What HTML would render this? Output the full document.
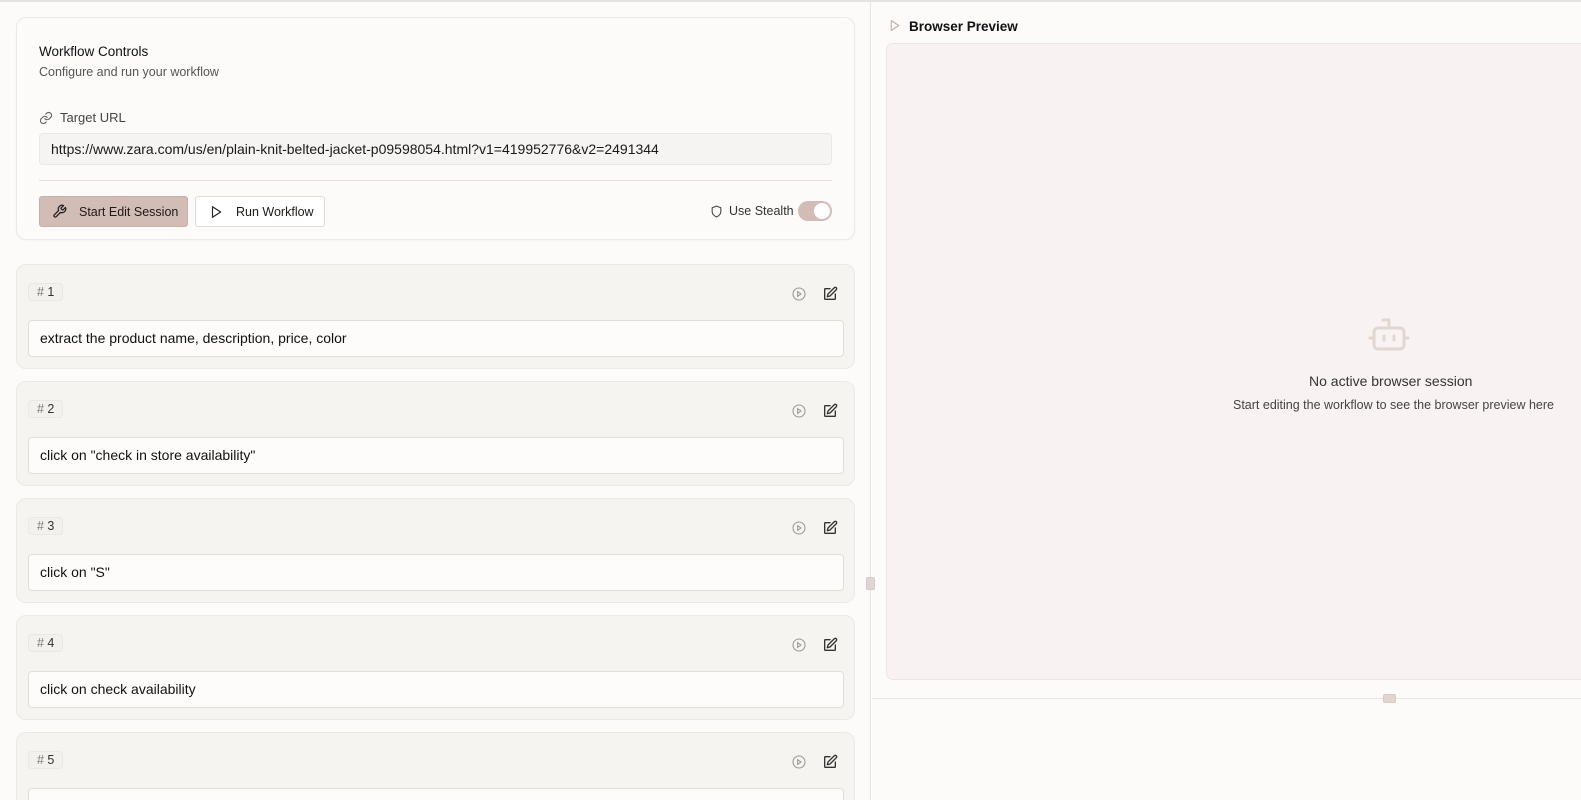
<!DOCTYPE html>
<html style="width:1581px;height:800px;overflow:hidden"><head><meta charset="utf-8"><style>
*{box-sizing:border-box;margin:0;padding:0}
html,body{width:1581px;height:800px;overflow:hidden}
body{background:#fcfbfa;font-family:"Liberation Sans",sans-serif;color:#1c1917;position:relative}
.top{position:absolute;left:0;top:0;width:1581px;height:2px;background:#e7e3e0}
.left{position:absolute;left:0;top:2px;width:871px;height:798px;border-right:1px solid #e9e4e1;overflow:hidden}
.card{position:absolute;left:16px;width:839px;border:1px solid #ede8e5;border-radius:10px}
.ctrl{top:15px;height:223px;background:#fcfbfa;box-shadow:0 1px 2px rgba(0,0,0,.03)}
.t{position:absolute;font-size:13px;white-space:nowrap}
.step{background:#f5f4f1;height:105px}
.badge{position:absolute;left:11px;top:18px;height:18px;padding:0 8px;border:1px solid #ebe7e3;border-radius:4px;background:#f3f1ee;font-size:12.5px;line-height:16px;color:#333}
.inp{position:absolute;left:11px;top:55px;width:816px;height:37px;border:1px solid #e2ddd9;border-radius:4px;background:#fdfcfb;font-size:14px;line-height:35px;padding-left:11px;color:#111}
.ic{position:absolute;top:21px}
</style></head><body>
<div class="top"></div>
<div class="left">
 <div class="card ctrl">
  <div class="t" style="left:22px;top:26px;font-size:13.5px;color:#111">Workflow Controls</div>
  <div class="t" style="left:22px;top:47px;font-size:12.5px;color:#555">Configure and run your workflow</div>
  <svg style="position:absolute;left:22px;top:93px" width="14" height="14" viewBox="0 0 24 24" fill="none" stroke="#666" stroke-width="2" stroke-linecap="round"><path d="M10 13a5 5 0 0 0 7.5.5l3-3a5 5 0 0 0-7-7l-1.7 1.7"/><path d="M14 11a5 5 0 0 0-7.5-.5l-3 3a5 5 0 0 0 7 7l1.7-1.7"/></svg>
  <div class="t" style="left:43px;top:92px;font-size:13px;color:#444">Target URL</div>
  <div style="position:absolute;left:22px;top:115px;width:793px;height:32px;background:#f5f4f2;border:1px solid #ebe7e4;border-radius:4px;font-size:14px;line-height:30px;padding-left:11px;white-space:nowrap">https://www.zara.com/us/en/plain-knit-belted-jacket-p09598054.html?v1=419952776&amp;v2=2491344</div>
  <div style="position:absolute;left:22px;top:162px;width:793px;height:1px;background:#e6dcd8"></div>
  <div style="position:absolute;left:22px;top:178px;width:149px;height:31px;background:#d2bcb6;border-radius:3px;border:1px solid #c8b1aa">
   <svg style="position:absolute;left:12px;top:7px" width="15" height="15" viewBox="0 0 24 24" fill="none" stroke="#222" stroke-width="2" stroke-linecap="round" stroke-linejoin="round"><path d="M14.7 6.3a1 1 0 0 0 0 1.4l1.6 1.6a1 1 0 0 0 1.4 0l3.8-3.8a6 6 0 0 1-7.9 7.9l-6.9 6.9a2.1 2.1 0 0 1-3-3l6.9-6.9a6 6 0 0 1 7.9-7.9z"/></svg>
   <span class="t" style="left:39px;top:8px;font-size:12.5px">Start Edit Session</span></div>
  <div style="position:absolute;left:178px;top:178px;width:130px;height:31px;background:#fff;border-radius:3px;border:1px solid #e0dad6">
   <svg style="position:absolute;left:13px;top:8px" width="14" height="14" viewBox="0 0 24 24" fill="none" stroke="#222" stroke-width="2" stroke-linejoin="round"><path d="M6 3l14 9-14 9z"/></svg>
   <span class="t" style="left:40px;top:8px;font-size:12.5px">Run Workflow</span></div>
  <svg style="position:absolute;left:693px;top:187px" width="13" height="13" viewBox="0 0 24 24" fill="none" stroke="#444" stroke-width="2" stroke-linejoin="round"><path d="M12 22s8-3 8-10V5l-8-3-8 3v7c0 7 8 10 8 10z"/></svg>
  <div class="t" style="left:712px;top:186px;font-size:12.5px;color:#333">Use Stealth</div>
  <div style="position:absolute;left:781px;top:183px;width:34px;height:20px;border-radius:10px;background:#d2bcb6"><div style="position:absolute;right:2px;top:2px;width:16px;height:16px;border-radius:50%;background:#fff"></div></div>
 </div>
 <div class="card step" style="top:262px"><div class="badge"><span style="color:#777">#</span> 1</div><svg class="ic" style="left:774px" width="16" height="16" viewBox="0 0 24 24" fill="none" stroke="#999" stroke-width="1.6"><circle cx="12" cy="12" r="9"/><path d="M10 8.5l5 3.5-5 3.5z"/></svg><svg class="ic" style="left:805px" width="16" height="16" viewBox="0 0 24 24" fill="none" stroke="#333" stroke-width="2" stroke-linecap="round" stroke-linejoin="round"><path d="M12 4H5a1 1 0 0 0-1 1v14a1 1 0 0 0 1 1h14a1 1 0 0 0 1-1v-7"/><path d="M18.4 2.6a2.1 2.1 0 0 1 3 3L12 15l-4 1 1-4z"/></svg><div class="inp">extract the product name, description, price, color</div></div>
 <div class="card step" style="top:379px"><div class="badge"><span style="color:#777">#</span> 2</div><svg class="ic" style="left:774px" width="16" height="16" viewBox="0 0 24 24" fill="none" stroke="#999" stroke-width="1.6"><circle cx="12" cy="12" r="9"/><path d="M10 8.5l5 3.5-5 3.5z"/></svg><svg class="ic" style="left:805px" width="16" height="16" viewBox="0 0 24 24" fill="none" stroke="#333" stroke-width="2" stroke-linecap="round" stroke-linejoin="round"><path d="M12 4H5a1 1 0 0 0-1 1v14a1 1 0 0 0 1 1h14a1 1 0 0 0 1-1v-7"/><path d="M18.4 2.6a2.1 2.1 0 0 1 3 3L12 15l-4 1 1-4z"/></svg><div class="inp">click on "check in store availability"</div></div>
 <div class="card step" style="top:496px"><div class="badge"><span style="color:#777">#</span> 3</div><svg class="ic" style="left:774px" width="16" height="16" viewBox="0 0 24 24" fill="none" stroke="#999" stroke-width="1.6"><circle cx="12" cy="12" r="9"/><path d="M10 8.5l5 3.5-5 3.5z"/></svg><svg class="ic" style="left:805px" width="16" height="16" viewBox="0 0 24 24" fill="none" stroke="#333" stroke-width="2" stroke-linecap="round" stroke-linejoin="round"><path d="M12 4H5a1 1 0 0 0-1 1v14a1 1 0 0 0 1 1h14a1 1 0 0 0 1-1v-7"/><path d="M18.4 2.6a2.1 2.1 0 0 1 3 3L12 15l-4 1 1-4z"/></svg><div class="inp">click on "S"</div></div>
 <div class="card step" style="top:613px"><div class="badge"><span style="color:#777">#</span> 4</div><svg class="ic" style="left:774px" width="16" height="16" viewBox="0 0 24 24" fill="none" stroke="#999" stroke-width="1.6"><circle cx="12" cy="12" r="9"/><path d="M10 8.5l5 3.5-5 3.5z"/></svg><svg class="ic" style="left:805px" width="16" height="16" viewBox="0 0 24 24" fill="none" stroke="#333" stroke-width="2" stroke-linecap="round" stroke-linejoin="round"><path d="M12 4H5a1 1 0 0 0-1 1v14a1 1 0 0 0 1 1h14a1 1 0 0 0 1-1v-7"/><path d="M18.4 2.6a2.1 2.1 0 0 1 3 3L12 15l-4 1 1-4z"/></svg><div class="inp">click on check availability</div></div>
 <div class="card step" style="top:730px;height:70px;border-bottom:none;border-radius:10px 10px 0 0"><div class="badge"><span style="color:#777">#</span> 5</div><svg class="ic" style="left:774px" width="16" height="16" viewBox="0 0 24 24" fill="none" stroke="#999" stroke-width="1.6"><circle cx="12" cy="12" r="9"/><path d="M10 8.5l5 3.5-5 3.5z"/></svg><svg class="ic" style="left:805px" width="16" height="16" viewBox="0 0 24 24" fill="none" stroke="#333" stroke-width="2" stroke-linecap="round" stroke-linejoin="round"><path d="M12 4H5a1 1 0 0 0-1 1v14a1 1 0 0 0 1 1h14a1 1 0 0 0 1-1v-7"/><path d="M18.4 2.6a2.1 2.1 0 0 1 3 3L12 15l-4 1 1-4z"/></svg><div class="inp" style="height:20px;border-bottom:none;border-radius:4px 4px 0 0"></div></div>
</div>
<div style="position:absolute;left:866px;top:577px;width:9px;height:13px;background:#e0d5d1;border:1px solid #d6cbc6;border-radius:2px"></div>
<svg style="position:absolute;left:888px;top:19px" width="13" height="13" viewBox="0 0 24 24" fill="none" stroke="#c9aaa3" stroke-width="2" stroke-linejoin="round"><path d="M6 3l14 9-14 9z"/></svg>
<div class="t" style="left:909px;top:19px;font-size:13.5px;color:#111;font-weight:bold">Browser Preview</div>
<div style="position:absolute;left:886px;top:43px;width:710px;height:637px;background:#f8f3f2;border:1px solid #ece6e3;border-radius:7px"></div>
<svg style="position:absolute;left:1368px;top:316px" width="42" height="36" viewBox="0 0 42 36" fill="none" stroke="#e0d7d3" stroke-width="3" stroke-linecap="round" stroke-linejoin="round"><rect x="6" y="12" width="30" height="21" rx="4"/><path d="M21 12V4h-6"/><path d="M2 22h4M36 22h4M16 20v4M26 20v4"/></svg>
<div class="t" style="left:1309px;top:373px;font-size:14px;color:#333">No active browser session</div>
<div class="t" style="left:1233px;top:398px;font-size:12.5px;color:#444">Start editing the workflow to see the browser preview here</div>
<div style="position:absolute;left:872px;top:698px;width:709px;height:1px;background:#e9e4e1"></div>
<div style="position:absolute;left:1383px;top:694px;width:13px;height:9px;background:#e0d5d1;border:1px solid #d6cbc6;border-radius:2px"></div>
</body></html>
